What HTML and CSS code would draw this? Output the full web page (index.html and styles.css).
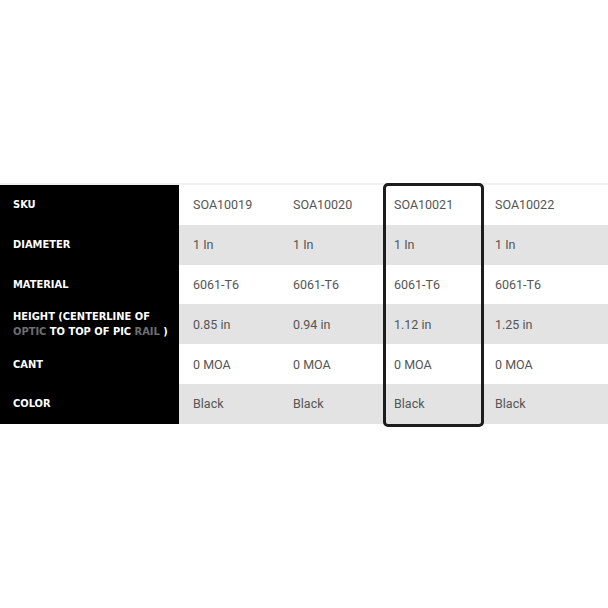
FILE: index.html
```html
<!DOCTYPE html>
<html>
<head>
<meta charset="utf-8">
<link rel="stylesheet" href="styles.css">
</head>
<body>
<div class="wrap">
  <table class="specs">
    <colgroup>
      <col class="c-label"><col class="c-val"><col class="c-val"><col class="c-val"><col class="c-last">
    </colgroup>
    <tr>
      <th>SKU</th><td>SOA10019</td><td>SOA10020</td><td>SOA10021</td><td>SOA10022</td>
    </tr>
    <tr class="alt">
      <th>DIAMETER</th><td>1 In</td><td>1 In</td><td>1 In</td><td>1 In</td>
    </tr>
    <tr>
      <th>MATERIAL</th><td>6061-T6</td><td>6061-T6</td><td>6061-T6</td><td>6061-T6</td>
    </tr>
    <tr class="alt">
      <th>HEIGHT (CENTERLINE OF<br><span class="dim">OPTIC</span> TO TOP OF PIC <span class="dim">RAIL</span> )</th><td>0.85 in</td><td>0.94 in</td><td>1.12 in</td><td>1.25 in</td>
    </tr>
    <tr>
      <th>CANT</th><td>0 MOA</td><td>0 MOA</td><td>0 MOA</td><td>0 MOA</td>
    </tr>
    <tr class="alt">
      <th>COLOR</th><td>Black</td><td>Black</td><td>Black</td><td>Black</td>
    </tr>
  </table>
  <div class="highlight"></div>
</div>
</body>
</html>
```

FILE: styles.css
```css
html, body {
  margin: 0;
  padding: 0;
  background: #ffffff;
}
.wrap {
  position: relative;
  margin-top: 183px;
  padding-bottom: 6px;
  border-top: 2px solid #f0f0f0;
}
.specs {
  width: 608px;
  border-collapse: collapse;
  table-layout: fixed;
}
.c-label { width: 179px; }
.c-val { width: 101px; }
.specs tr { height: 39.8px; }
.specs th {
  background: #000;
  color: #fff;
  text-align: left;
  font-family: "DejaVu Sans Condensed", "DejaVu Sans", sans-serif;
  font-weight: bold;
  font-size: 11px;
  line-height: 15px;
  letter-spacing: 0;
  padding: 0 0 0 13px;
  vertical-align: middle;
}
.specs th .dim { color: #6e6e6e; }
.specs td {
  font-family: "Roboto", "Liberation Sans", sans-serif;
  font-size: 12.5px;
  color: #555;
  padding: 0 0 0 13px;
  vertical-align: middle;
  white-space: nowrap;
}
.specs tr.alt td { background: #e3e3e3; }
.specs td:nth-child(2) { padding-left: 14px; }
.highlight {
  position: absolute;
  left: 383px;
  top: -2px;
  width: 95px;
  height: 238px;
  border: 3px solid #1c1c1c;
  border-radius: 5px;
}
```
